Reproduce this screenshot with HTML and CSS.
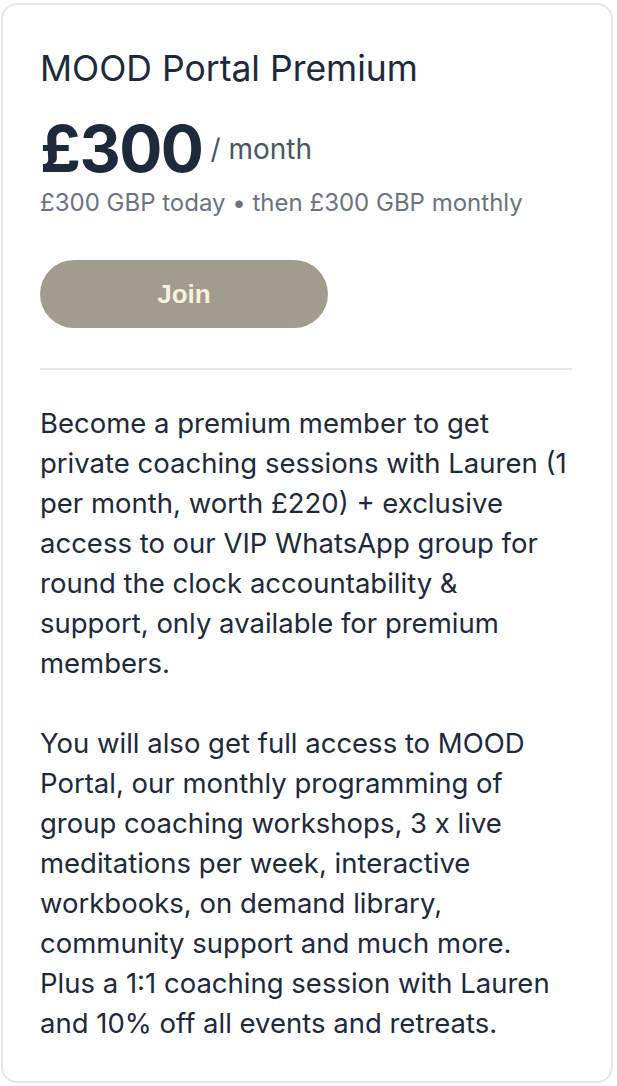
FILE: index.html
```html
<!DOCTYPE html>
<html lang="en">
<head>
  <meta charset="UTF-8" />
  <title>MOOD Portal Premium</title>
  <link rel="stylesheet" href="styles.css">
</head>
<body>

  <div class="plan-card">
    <h2 class="plan-name">MOOD Portal Premium</h2>

    <div class="price-row">
      <span class="price">£300</span>
      <span class="period">/ month</span>
    </div>
    <p class="billing">£300 GBP today • then £300 GBP monthly</p>

    <a class="join-btn" href="#">Join</a>

    <hr class="divider">

    <p class="description">Become a premium member to get private coaching sessions with Lauren (1 per month, worth £220) + exclusive access to our VIP WhatsApp group for round the clock accountability &amp; support, only available for premium members.</p>
    <p class="description">You will also get full access to MOOD Portal, our monthly programming of group coaching workshops, 3 x live meditations per week, interactive workbooks, on demand library, community support and much more. Plus a 1:1 coaching session with Lauren and 10% off all events and retreats.</p>
  </div>

</body>
</html>
```

FILE: styles.css
```css
body {
  font-family: 'Inter', 'Noto Sans', sans-serif;
  margin: 0;
  padding: 3px 4px 3px 1px;
  background: #ffffff;
  color: #1e293b;
}

.plan-card {
  border: 2px solid #e5e7eb;
  border-radius: 16px;
  padding: 42px 39px 38px 37px;
  background: #fff;
}

.plan-name {
  margin: 0;
  font-size: 35.5px;
  line-height: 44px;
  font-weight: 400;
  color: #1e293b;
}

.price-row {
  display: flex;
  align-items: center;
  gap: 8px;
  margin-top: 22px;
}

.price {
  font-size: 64px;
  line-height: 72px;
  font-weight: 700;
  letter-spacing: -1.5px;
  color: #1e293b;
}

.period {
  font-size: 28px;
  line-height: 1;
  color: #4b5563;
}

.billing {
  margin: 2px 0 0;
  font-size: 24px;
  line-height: 32px;
  color: #6b7280;
}

.join-btn {
  display: flex;
  align-items: center;
  justify-content: center;
  width: 288px;
  height: 68px;
  margin-top: 41px;
  border-radius: 34px;
  background: #a29c8f;
  color: #f6f1e0;
  font-family: 'Liberation Sans', Arial, sans-serif;
  font-size: 26px;
  font-weight: 700;
  text-decoration: none;
}

.divider {
  border: none;
  border-top: 2px solid #e5e7eb;
  margin: 40px 0 33px;
}

.description {
  margin: 0 0 40px;
  font-size: 27.5px;
  line-height: 40px;
  color: #1e293b;
}

.description:last-child {
  margin-bottom: 0;
}
```
